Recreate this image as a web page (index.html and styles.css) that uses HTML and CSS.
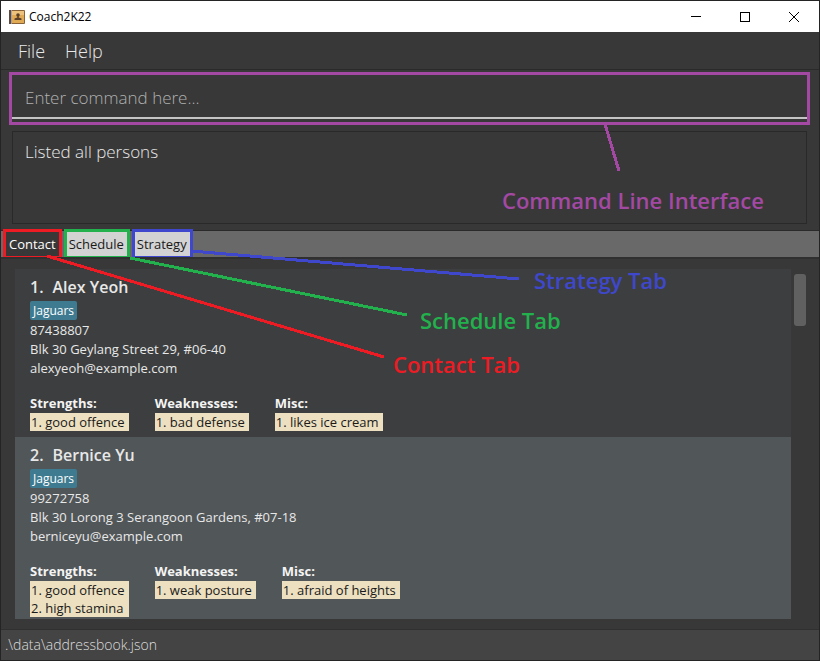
FILE: index.html
```html
<!DOCTYPE html>
<html lang="en">
<head>
<meta charset="utf-8">
<title>Coach2K22</title>
<link rel="stylesheet" href="styles.css">
</head>
<body>
<div class="window">
  <header class="titlebar">
    <svg class="app-icon" width="16" height="16" viewBox="0 0 16 16" aria-hidden="true">
      <rect x="0" y="1" width="16" height="14" rx="1" fill="#8a6238"/>
      <rect x="0" y="1" width="3" height="14" fill="#5c4a40"/>
      <rect x="2" y="1" width="1" height="14" fill="#a9a29a"/>
      <rect x="3" y="2" width="12" height="12" fill="#e0aa55"/>
      <rect x="3" y="2" width="12" height="4" fill="#ecc27c"/>
      <circle cx="9" cy="6" r="1.800" fill="#5a4028"/>
      <path d="M8.300 7h1.400v1.500l2.800 1V11h-7V9.500l2.800-1z" fill="#5a4028"/>
    </svg>
    <h1 class="title">Coach2K22</h1>
    <div class="window-buttons">
      <button type="button" aria-label="Minimize"><svg width="12" height="12" viewBox="0 0 12 12"><path d="M1 5.500h10" stroke="#000"/></svg></button>
      <button type="button" aria-label="Maximize"><svg width="12" height="12" viewBox="0 0 12 12"><rect x="1.500" y="1.500" width="9" height="9" fill="none" stroke="#000"/></svg></button>
      <button type="button" aria-label="Close"><svg width="12" height="12" viewBox="0 0 12 12"><path d="M1 1l10 10M11 1L1 11" stroke="#000"/></svg></button>
    </div>
  </header>
  <nav class="menubar">
    <button type="button">File</button>
    <button type="button">Help</button>
  </nav>
  <form class="command">
    <input type="text" aria-label="Command" placeholder="Enter command here...">
  </form>
  <section class="result"><output class="result-box">Listed all persons</output></section>
  <div class="tabs" role="tablist">
    <button type="button" role="tab" aria-selected="true" class="tab tab-contact">Contact</button>
    <button type="button" role="tab" aria-selected="false" class="tab tab-schedule">Schedule</button>
    <button type="button" role="tab" aria-selected="false" class="tab tab-strategy">Strategy</button>
  </div>
  <main class="content">
    <ol class="people">
      <li class="person">
        <h2><span>1.</span><span>Alex Yeoh</span></h2>
        <span class="team">Jaguars</span>
        <p>87438807</p>
        <p>Blk 30 Geylang Street 29, #06-40</p>
        <p>alexyeoh@example.com</p>
        <div class="traits">
          <section><h3>Strengths:</h3><div class="notes"><div>1. good offence</div></div></section>
          <section><h3>Weaknesses:</h3><div class="notes"><div>1. bad defense</div></div></section>
          <section><h3>Misc:</h3><div class="notes"><div>1. likes ice cream</div></div></section>
        </div>
      </li>
      <li class="person">
        <h2><span>2.</span><span>Bernice Yu</span></h2>
        <span class="team">Jaguars</span>
        <p>99272758</p>
        <p>Blk 30 Lorong 3 Serangoon Gardens, #07-18</p>
        <p>berniceyu@example.com</p>
        <div class="traits">
          <section><h3>Strengths:</h3><div class="notes"><div>1. good offence</div><div>2. high stamina</div></div></section>
          <section><h3>Weaknesses:</h3><div class="notes"><div>1. weak posture</div></div></section>
          <section><h3>Misc:</h3><div class="notes"><div>1. afraid of heights</div></div></section>
        </div>
      </li>
    </ol>
    <div class="scrollbar"><div class="thumb"></div></div>
  </main>
  <footer class="statusbar">.\data\addressbook.json</footer>

  <svg class="pointers" width="820" height="661" viewBox="0 0 820 661" aria-hidden="true">
    <g fill="none" stroke-width="3" shape-rendering="crispEdges">
      <path d="M605 124L619 171" stroke="#a349a4"/>
      <path d="M191 251L519 279" stroke="#3f48cc"/>
      <path d="M130 258L407 315" stroke="#22b14c"/>
      <path d="M47 256L384 357" stroke="#ed1c24"/>
    </g>
  </svg>
  <span class="callout callout-command">Command Line Interface</span>
  <span class="callout callout-strategy">Strategy Tab</span>
  <span class="callout callout-schedule">Schedule Tab</span>
  <span class="callout callout-contact">Contact Tab</span>
</div>
</body>
</html>
```
FILE: styles.css
```css
* { box-sizing: border-box; }

body {
  margin: 0;
  font-family: "Open Sans", "Noto Sans", sans-serif;
  font-size: 13px;
  color: #e8e8e8;
  background: #383838;
}

h1, h2, h3, p, ol { margin: 0; padding: 0; }

button, input {
  font: inherit;
  color: inherit;
  background: none;
  border: 0;
  margin: 0;
  padding: 0;
}

.window {
  position: relative;
  display: flex;
  flex-direction: column;
  min-height: 100vh;
  border: 1px solid #242424;
  overflow: hidden;
}

.titlebar {
  display: flex;
  align-items: center;
  height: 31px;
  padding: 0 1px 0 8px;
  background: #fff;
  color: #000;
}

.title {
  flex: 1;
  margin-left: 4px;
  font-size: 12px;
  font-weight: 400;
}

.window-buttons { display: flex; }

.window-buttons button {
  display: grid;
  place-items: center;
  width: 49px;
  height: 31px;
}

.menubar {
  display: flex;
  gap: 20px;
  height: 38px;
  padding: 0 17px;
  border-bottom: 1px solid #2a2a2a;
  font-size: 18px;
  font-weight: 300;
}

.command {
  margin: 2px 9px 0 8px;
  height: 53px;
  border: 3px solid #a349a4;
}

.command input {
  display: block;
  width: 100%;
  height: 44px;
  padding: 2px 13px 0;
  border-bottom: 2px solid #c4c4c4;
  font-size: 17px;
  font-weight: 300;
  outline: 0;
}

.command input::placeholder { color: #b0b0b0; opacity: 1; }

.result {
  height: 106px;
  padding: 6px 12px 6px 11px;
  border-bottom: 1px solid #2a2a2a;
}

.result-box {
  display: block;
  height: 93px;
  padding: 8px 12px;
  border: 1px solid #292929;
  font-size: 17px;
  line-height: 24px;
  font-weight: 300;
}

.tabs {
  display: flex;
  gap: 8px;
  height: 26px;
  padding: 1px 5px;
  background: #696969;
}

.tab {
  padding: 0 3px 0 2px;
  background: #d3d3d3;
  color: #1a1a1a;
  outline: 3px solid;
}

.tab-contact { padding: 0 3px; background: #383838; color: #fff; outline-color: #ed1c24; }
.tab-schedule { outline-color: #22b14c; }
.tab-strategy { outline-color: #3f48cc; }

.content {
  display: flex;
  flex: 1;
  padding: 10px 14px;
  border-top: 2px solid #303030;
}

.people { flex: 1; list-style: none; }

.person {
  height: 168px;
  padding: 7px 15px 2px;
  background: #3c3e3f;
}

.person:nth-child(even) { height: 182px; background: #515658; }

.person h2 {
  display: flex;
  gap: 9px;
  font-size: 16px;
  line-height: 22px;
  font-weight: 600;
}

.team {
  display: block;
  width: fit-content;
  margin: 3px 0 1px;
  padding: 0 3px;
  border-radius: 2px;
  background: #3e7b91;
  color: #fff;
  font-size: 12px;
  line-height: 19px;
}

.person p { line-height: 19px; }

.traits {
  display: flex;
  gap: 26px;
  margin-top: 16px;
}

.traits h3 {
  color: #f4f4f4;
  font-size: 13px;
  line-height: 19px;
  font-weight: 700;
}

.notes {
  width: fit-content;
  padding: 0 4px 0 1px;
  background: #ede0c0;
  color: #1a1a1a;
  line-height: 18px;
}

.scrollbar { width: 14px; padding: 5px 0 0 3px; }

.thumb {
  width: 12px;
  height: 52px;
  border-radius: 3px;
  background: #606060;
}

.statusbar {
  height: 31px;
  padding-left: 4px;
  border-top: 1px solid #303030;
  background: #444;
  color: #ddd;
  font-size: 14px;
  line-height: 30px;
  font-weight: 300;
}

/* Annotation layer drawn over the window */
.pointers {
  position: absolute;
  top: -1px;
  left: -1px;
  pointer-events: none;
}

.callout {
  position: absolute;
  font-size: 22px;
  line-height: 30px;
  font-weight: 600;
  white-space: nowrap;
}

.callout-command { left: 501px; top: 184px; color: #a349a4; }
.callout-strategy { left: 533px; top: 264px; color: #3f48cc; }
.callout-schedule { left: 419px; top: 304px; color: #22b14c; }
.callout-contact { left: 392px; top: 348px; color: #ed1c24; }
```
